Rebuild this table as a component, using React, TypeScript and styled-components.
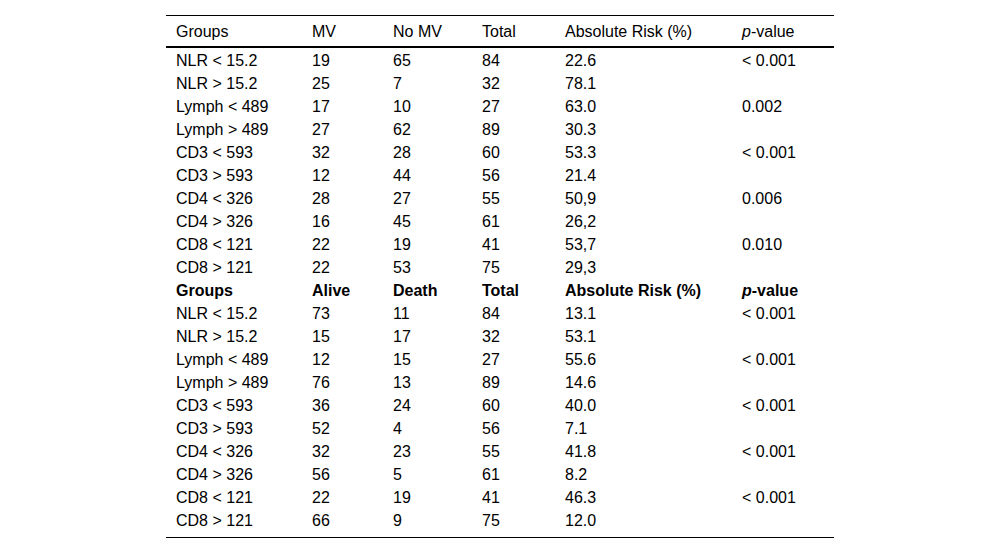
import React from 'react';
import styled, { createGlobalStyle } from 'styled-components';

const GlobalStyle = createGlobalStyle`
  html, body {
    margin: 0;
    padding: 0;
    background: #ffffff;
  }
  body {
    font-family: "Liberation Sans", Arial, sans-serif;
    color: #000;
  }
`;

type Row = [string, string, string, string, string, string];

const mvRows: Row[] = [
  ['NLR < 15.2', '19', '65', '84', '22.6', '< 0.001'],
  ['NLR > 15.2', '25', '7', '32', '78.1', ''],
  ['Lymph < 489', '17', '10', '27', '63.0', '0.002'],
  ['Lymph > 489', '27', '62', '89', '30.3', ''],
  ['CD3 < 593', '32', '28', '60', '53.3', '< 0.001'],
  ['CD3 > 593', '12', '44', '56', '21.4', ''],
  ['CD4 < 326', '28', '27', '55', '50,9', '0.006'],
  ['CD4 > 326', '16', '45', '61', '26,2', ''],
  ['CD8 < 121', '22', '19', '41', '53,7', '0.010'],
  ['CD8 > 121', '22', '53', '75', '29,3', ''],
];

const deathRows: Row[] = [
  ['NLR < 15.2', '73', '11', '84', '13.1', '< 0.001'],
  ['NLR > 15.2', '15', '17', '32', '53.1', ''],
  ['Lymph < 489', '12', '15', '27', '55.6', '< 0.001'],
  ['Lymph > 489', '76', '13', '89', '14.6', ''],
  ['CD3 < 593', '36', '24', '60', '40.0', '< 0.001'],
  ['CD3 > 593', '52', '4', '56', '7.1', ''],
  ['CD4 < 326', '32', '23', '55', '41.8', '< 0.001'],
  ['CD4 > 326', '56', '5', '61', '8.2', ''],
  ['CD8 < 121', '22', '19', '41', '46.3', '< 0.001'],
  ['CD8 > 121', '66', '9', '75', '12.0', ''],
];

const widths = [136, 81, 89, 83, 177, 102];

const Table = styled.table`
  border-collapse: collapse;
  width: 668px;
  margin: 15px auto 0;
  font-size: 16px;
  table-layout: fixed;
  border-top: 1px solid #000;
  border-bottom: 1px solid #000;
`;

const Head = styled.thead`
  border-bottom: 2px solid #000;
`;

const HeadCell = styled.th`
  font-weight: normal;
  text-align: left;
  height: 28px;
  padding: 2px 0 0 10px;
  line-height: 28px;
  vertical-align: top;
`;

const BodyRow = styled.tr<{ $last?: boolean }>`
  td {
    padding-bottom: ${(p) => (p.$last ? '6px' : '0')};
  }
`;

const Cell = styled.td<{ $bold?: boolean }>`
  text-align: left;
  height: 21px;
  line-height: 21px;
  padding: 2px 0 0 10px;
  font-weight: ${(p) => (p.$bold ? 'bold' : 'normal')};
  white-space: nowrap;
  vertical-align: top;
`;

const PValue: React.FC = () => (
  <>
    <i>p</i>-value
  </>
);

export default function App() {
  const subHeader = ['Groups', 'Alive', 'Death', 'Total', 'Absolute Risk (%)'];
  return (
    <>
      <GlobalStyle />
      <Table>
        <colgroup>
          {widths.map((w, i) => (
            <col key={i} style={{ width: w }} />
          ))}
        </colgroup>
        <Head>
          <tr>
            <HeadCell>Groups</HeadCell>
            <HeadCell>MV</HeadCell>
            <HeadCell>No MV</HeadCell>
            <HeadCell>Total</HeadCell>
            <HeadCell>Absolute Risk (%)</HeadCell>
            <HeadCell>
              <PValue />
            </HeadCell>
          </tr>
        </Head>
        <tbody>
          {mvRows.map((r, i) => (
            <BodyRow key={'mv' + i}>
              {r.map((c, j) => (
                <Cell key={j}>{c}</Cell>
              ))}
            </BodyRow>
          ))}
          <BodyRow>
            {subHeader.map((c, j) => (
              <Cell key={j} $bold>
                {c}
              </Cell>
            ))}
            <Cell $bold>
              <PValue />
            </Cell>
          </BodyRow>
          {deathRows.map((r, i) => (
            <BodyRow key={'d' + i} $last={i === deathRows.length - 1}>
              {r.map((c, j) => (
                <Cell key={j}>{c}</Cell>
              ))}
            </BodyRow>
          ))}
        </tbody>
      </Table>
    </>
  );
}
